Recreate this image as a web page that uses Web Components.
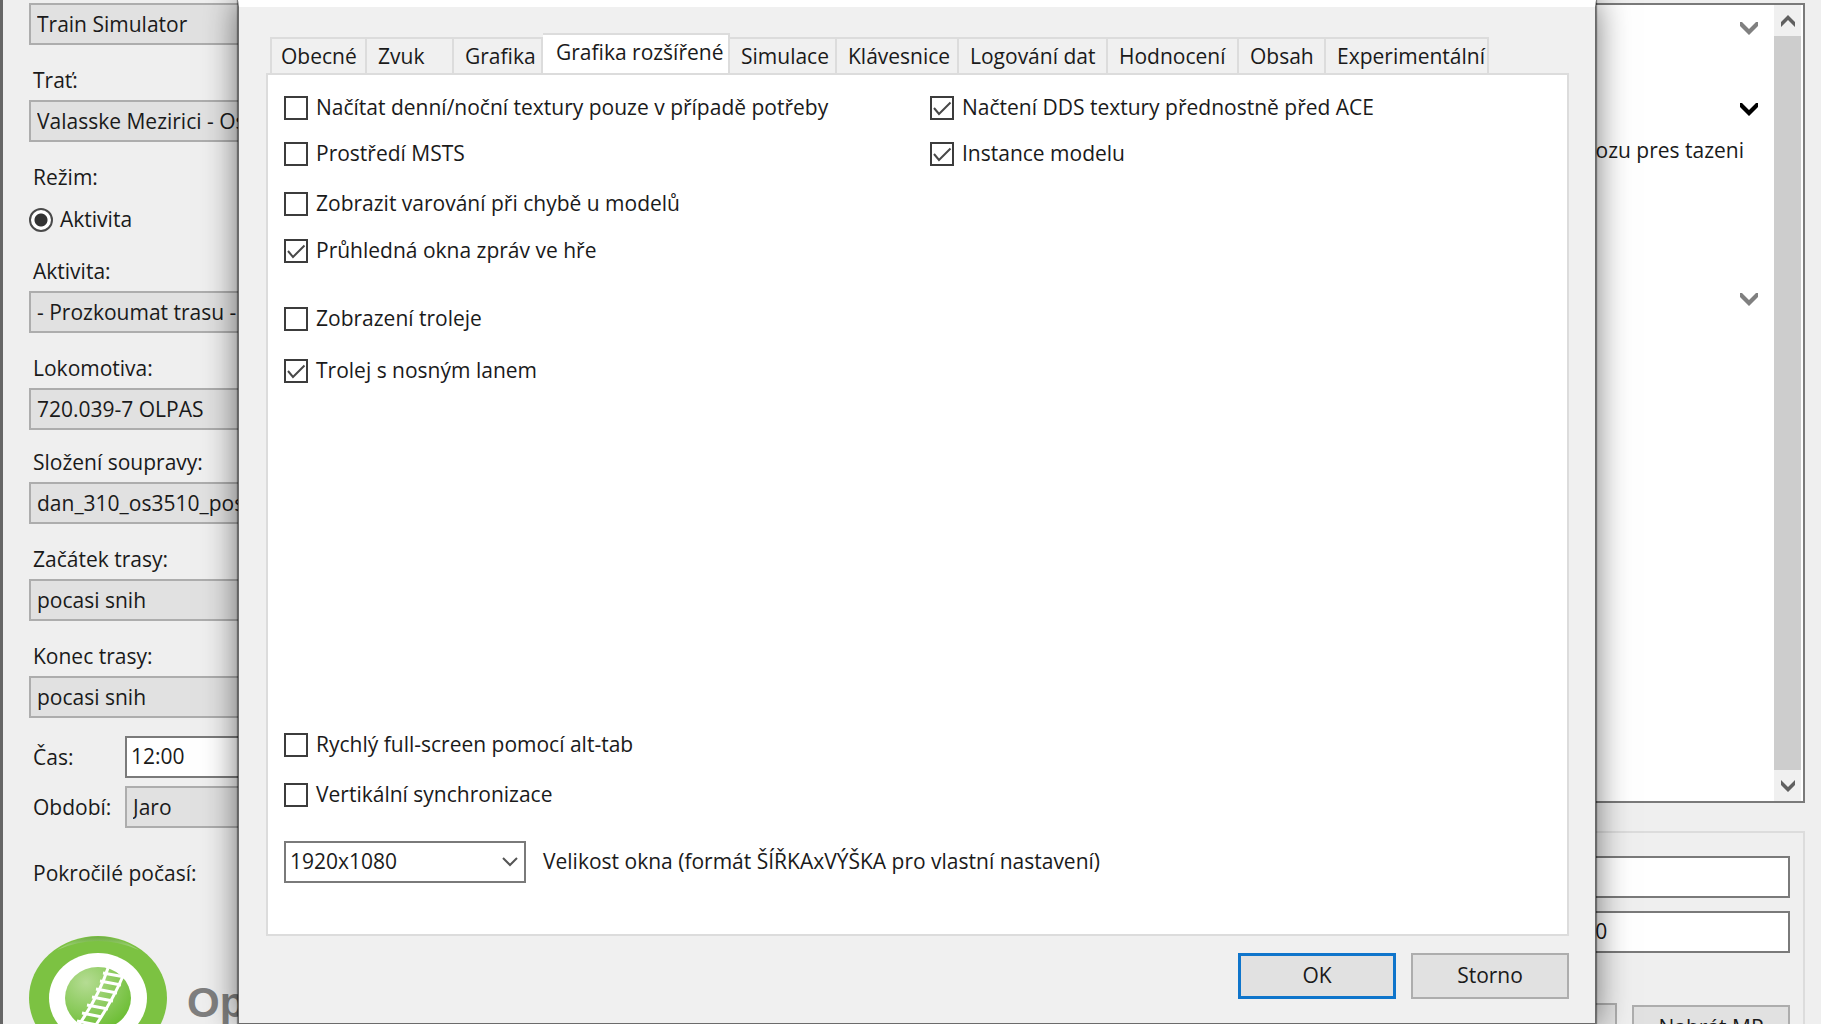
<!DOCTYPE html>
<html lang="cs">
<head>
<meta charset="utf-8">
<title>Open Rails</title>
<style>
    body {
        margin: 0;
        overflow: hidden;
        background: #efefef;
        color: #1a1a1a;
        font-family: "Open Sans", "Noto Sans", sans-serif;
        font-size: 21px;
        line-height: 28px;
    }
</style>
</head>
<body>
<launcher-window></launcher-window>

<script>
const define = (name, html, setup) => {
  const template = document.createElement('template');
  template.innerHTML = html;
  customElements.define(name, class extends HTMLElement {
    constructor() {
      super();
      this._shadowRoot = this.attachShadow({ mode: 'open' });
      this._shadowRoot.appendChild(template.content.cloneNode(true));
    }
    connectedCallback() {
      if (setup) setup(this, this._shadowRoot);
    }
  });
};

// label above (or left of) a drop-down or a text box
define('launcher-field', `
    <style>
        :host {
            display: flex;
            flex-direction: column;
            justify-content: flex-end;
            gap: 6px;
        }
        :host([inline]) {
            display: grid;
            grid-template-columns: 96px 1fr;
            align-content: end;
            align-items: center;
            gap: 0;
        }
        label {
            padding-left: 4px;
            white-space: nowrap;
        }
        label:empty {
            display: none;
        }
        select, input {
            appearance: none;
            box-sizing: border-box;
            width: 100%;
            height: 42px;
            margin: 0;
            padding: 0 6px;
            border: 2px solid #adadad;
            border-radius: 0;
            background: #e1e1e1;
            color: inherit;
            font: inherit;
        }
        input {
            padding: 0 4px 2px;
            border-color: #7a7a7a;
            background: #fff;
        }
    </style>
    <label for="control"></label>
`, (host, root) => {
  root.querySelector('label').textContent = host.getAttribute('label') || '';
  const value = host.getAttribute('value') || '';
  let control;
  if (host.hasAttribute('text')) {
    control = document.createElement('input');
    control.type = 'text';
    control.value = value;
  } else {
    control = document.createElement('select');
    control.add(new Option(value));
  }
  control.id = 'control';
  if (!host.hasAttribute('label')) control.setAttribute('aria-label', host.getAttribute('name'));
  root.appendChild(control);
});

define('launcher-radio', `
    <style>
        :host {
            display: block;
        }
        label {
            display: flex;
            align-items: center;
            gap: 7px;
            height: 24px;
        }
        input {
            appearance: none;
            box-sizing: border-box;
            width: 24px;
            height: 24px;
            margin: 0;
            border: 2px solid #4a4a4a;
            border-radius: 50%;
            background: #fff;
        }
        input:checked {
            background: radial-gradient(circle, #333 6px, #fff 7px);
        }
        .text {
            padding-bottom: 2px;
        }
    </style>
    <label><input type="radio" checked><span class="text"><slot></slot></span></label>
`);

define('option-check', `
    <style>
        :host {
            display: block;
        }
        label {
            display: inline-flex;
            align-items: center;
            gap: 8px;
            height: 24px;
            white-space: nowrap;
        }
        .box {
            display: grid;
            width: 24px;
            height: 24px;
        }
        .text {
            padding-bottom: 2px;
        }
        input, svg {
            grid-area: 1 / 1;
        }
        input {
            appearance: none;
            box-sizing: border-box;
            width: 24px;
            height: 24px;
            margin: 0;
            border: 2px solid #3c3c3c;
            background: #fff;
        }
        svg {
            visibility: hidden;
            pointer-events: none;
        }
        input:checked + svg {
            visibility: visible;
        }
    </style>
    <label>
        <span class="box">
            <input type="checkbox">
            <svg width="24" height="24" viewBox="0 0 24 24" fill="none" stroke="#484848" stroke-width="2"><path d="M4 12l5 6L20.500 6.500"/></svg>
        </span>
        <span class="text"><slot></slot></span>
    </label>
`, (host, root) => {
  root.querySelector('input').checked = host.hasAttribute('checked');
});

define('push-button', `
    <style>
        :host {
            display: block;
        }
        button {
            box-sizing: border-box;
            width: 100%;
            height: 46px;
            padding: 0 0 2px;
            border: 2px solid #adadad;
            background: #e1e1e1;
            color: inherit;
            font: inherit;
        }
        :host([default]) button {
            border: 3px solid #0f75cb;
        }
    </style>
    <button type="button"><slot></slot></button>
`);

define('expander-arrow', `
    <style>
        :host {
            display: flex;
            justify-content: flex-end;
            color: #808080;
        }
        :host([active]) {
            color: #000;
        }
        button {
            display: flex;
            align-items: center;
            width: 18px;
            height: 46px;
            padding: 0;
            border: 0;
            background: none;
            color: inherit;
        }
    </style>
    <button type="button" aria-label="Rozbalit">
        <svg width="18" height="14" viewBox="0 0 18 14" fill="currentColor"><path d="M0 1h2l7 7 7-7h2v4l-9 9-9-9z"/></svg>
    </button>
`);

define('scroll-bar', `
    <style>
        :host {
            display: flex;
            flex-direction: column;
            width: 27px;
            background: #f0f0f0;
        }
        button {
            display: flex;
            align-items: center;
            justify-content: center;
            height: 31px;
            padding: 0;
            border: 0;
            background: none;
        }
        .thumb {
            flex: 1;
            background: #cdcdcd;
        }
    </style>
    <button type="button" aria-label="Nahoru">
        <svg width="14" height="12" viewBox="0 0 14 12" fill="#606060"><path d="M7 0l7 7v5l-7-7-7 7V7z"/></svg>
    </button>
    <div class="thumb"></div>
    <button type="button" aria-label="Dolů">
        <svg width="14" height="12" viewBox="0 0 14 12" fill="#606060"><path d="M7 12l7-7V0L7 7 0 0v5z"/></svg>
    </button>
`);

define('rails-logo', `
    <style>
        :host {
            display: flex;
            align-items: center;
            gap: 20px;
            color: #7f7f7f;
            font: bold 42px/48px "Liberation Sans", Arial, sans-serif;
        }
        svg {
            flex: none;
        }
        .name {
            padding-top: 10px;
        }
    </style>
    <svg width="138" height="124" viewBox="0 0 138 124">
        <defs>
            <radialGradient id="ball" cx=".32" cy=".25" r=".8">
                <stop offset="0" stop-color="#b5dc93"/>
                <stop offset="1" stop-color="#6dbe35"/>
            </radialGradient>
            <linearGradient id="shine" x1="0" y1="0" x2="0" y2="1">
                <stop offset="0" stop-color="#6fae42"/>
                <stop offset="1" stop-color="#a9d983"/>
            </linearGradient>
        </defs>
        <ellipse cx="69" cy="62" rx="69" ry="62" fill="#7cc242"/>
        <path d="M28 14Q69-13 110 14Q69-4 28 14z" fill="url(#shine)"/>
        <ellipse cx="69" cy="62" rx="49" ry="45" fill="#fff"/>
        <ellipse cx="69" cy="62" rx="33" ry="31" fill="url(#ball)"/>
        <g fill="none" stroke="#fff" stroke-width="3">
            <path d="M79 32Q70 60 49 90M94 40Q82 68 62 96"/>
            <path d="M74 37l22 4M71 45l21 4M67 53l21 4M63 61l21 4M58 69l21 4M53 77l20 4M48 85l20 4"/>
        </g>
    </svg>
    <span class="name"><slot></slot></span>
`);

define('settings-tab', `
    <style>
        :host {
            display: flex;
            align-items: flex-end;
        }
        button {
            width: 100%;
            height: 36px;
            padding: 0 0 0 11px;
            border: 2px solid #dcdcdc;
            border-width: 2px 2px 0 0;
            background: #f0f0f0;
            color: inherit;
            font: inherit;
            text-align: left;
            white-space: nowrap;
        }
        :host(:first-child) button {
            border-left-width: 2px;
            padding-left: 9px;
        }
        :host([selected]) button {
            height: 42px;
            margin-bottom: -2px;
            padding: 0 0 6px 13px;
            background: #fff;
        }
    </style>
    <button type="button" role="tab"><slot></slot></button>
`, (host, root) => {
  root.querySelector('button').setAttribute('aria-selected', host.hasAttribute('selected'));
});

define('resolution-picker', `
    <style>
        :host {
            display: flex;
            align-items: center;
            gap: 17px;
            white-space: nowrap;
        }
        .combo {
            display: grid;
            width: 242px;
            align-items: center;
        }
        select, svg {
            grid-area: 1 / 1;
        }
        select {
            appearance: none;
            box-sizing: border-box;
            height: 42px;
            padding: 0 4px 2px;
            border: 2px solid #7a7a7a;
            border-radius: 0;
            background: #fff;
            color: inherit;
            font: inherit;
        }
        svg {
            justify-self: end;
            margin-right: 8px;
            pointer-events: none;
        }
        label {
            padding-bottom: 2px;
        }
    </style>
    <div class="combo">
        <select id="size"><option>1920x1080</option></select>
        <svg width="16" height="10" viewBox="0 0 16 10" fill="none" stroke="#555" stroke-width="2"><path d="M1 1l7 7 7-7"/></svg>
    </div>
    <label for="size"><slot></slot></label>
`);

define('settings-dialog', `
    <style>
        :host {
            display: flex;
            flex-direction: column;
            box-sizing: border-box;
            border: 1px solid #6b6b6b;
            border-top: 7px solid #fff;
            background: #f0f0f0;
            box-shadow: 0 0 32px rgba(0, 0, 0, .55), 0 0 1px 1px rgba(0, 0, 0, .4);
            padding: 26px 26px 24px 27px;
        }
        .tabs {
            display: grid;
            grid-template-columns: 97px 87px 89px 187px 107px 122px 149px 131px 87px 163px;
            height: 40px;
            padding-left: 4px;
        }
        .page {
            flex: 1;
            display: grid;
            grid-template-columns: 646px 1fr;
            grid-template-rows: 46px 50px 47px 68px 52px 1fr 50px 58px 42px;
            padding: 21px 16px 51px;
            border: 2px solid #dcdcdc;
            background: #fff;
        }
        .left {
            grid-column: 1;
        }
        .bottom {
            grid-row: 7;
        }
        .size {
            grid-column: 1 / 3;
        }
        .buttons {
            display: grid;
            grid-template-columns: 158px 158px;
            justify-content: end;
            gap: 15px;
            margin-top: 17px;
        }
    </style>
    <div class="tabs" role="tablist">
        <settings-tab>Obecné</settings-tab>
        <settings-tab>Zvuk</settings-tab>
        <settings-tab>Grafika</settings-tab>
        <settings-tab selected>Grafika rozšířené</settings-tab>
        <settings-tab>Simulace</settings-tab>
        <settings-tab>Klávesnice</settings-tab>
        <settings-tab>Logování dat</settings-tab>
        <settings-tab>Hodnocení</settings-tab>
        <settings-tab>Obsah</settings-tab>
        <settings-tab>Experimentální</settings-tab>
    </div>
    <div class="page">
        <option-check>Načítat denní/noční textury pouze v případě potřeby</option-check>
        <option-check checked>Načtení DDS textury přednostně před ACE</option-check>
        <option-check>Prostředí MSTS</option-check>
        <option-check checked>Instance modelu</option-check>
        <option-check class="left">Zobrazit varování při chybě u modelů</option-check>
        <option-check class="left" checked>Průhledná okna zpráv ve hře</option-check>
        <option-check class="left">Zobrazení troleje</option-check>
        <option-check class="left" checked>Trolej s nosným lanem</option-check>
        <option-check class="left bottom">Rychlý full-screen pomocí alt-tab</option-check>
        <option-check class="left">Vertikální synchronizace</option-check>
        <resolution-picker class="size">Velikost okna (formát ŠÍŘKAxVÝŠKA pro vlastní nastavení)</resolution-picker>
    </div>
    <div class="buttons">
        <push-button default>OK</push-button>
        <push-button>Storno</push-button>
    </div>
`);

define('activity-details', `
    <style>
        :host {
            display: flex;
            flex: none;
            box-sizing: border-box;
            height: 800px;
            padding-right: 2px;
            border: 2px solid #7a7a7a;
            background: #fff;
        }
        .content {
            flex: 1;
            display: grid;
            grid-template-rows: 81px 50px 140px 1fr;
            padding-right: 16px;
        }
        p {
            margin: 0;
            padding-right: 14px;
            text-align: right;
        }
    </style>
    <div class="content">
        <expander-arrow></expander-arrow>
        <expander-arrow active></expander-arrow>
        <p>vozu pres tazeni</p>
        <expander-arrow></expander-arrow>
    </div>
    <scroll-bar></scroll-bar>
`);

define('multiplayer-group', `
    <style>
        :host {
            display: grid;
            flex: none;
            grid-template-rows: 42px 42px 85px;
            grid-template-columns: 158px 158px;
            justify-content: end;
            align-items: end;
            row-gap: 13px;
            column-gap: 15px;
            padding: 23px 13px;
            border: 2px solid #dcdcdc;
        }
        .wide {
            grid-column: 1 / 3;
        }
    </style>
    <launcher-field class="wide" text name="Jméno"></launcher-field>
    <launcher-field class="wide" text name="Adresa" value="127.0.0.1:3000"></launcher-field>
    <push-button></push-button>
    <push-button>Nahrát MP</push-button>
`);

define('launcher-window', `
    <style>
        :host {
            display: flex;
            justify-content: space-between;
            position: relative;
            box-sizing: border-box;
            height: 100vh;
            padding: 3px 16px 0 26px;
            border-left: 3px solid #666;
            overflow: hidden;
        }
        .route {
            display: grid;
            width: 340px;
            grid-template-rows: 42px 97px 90px 101px 97px 94px 97px 97px 60px 50px 59px 49px 124px;
        }
        .mode {
            display: flex;
            flex-direction: column;
            justify-content: flex-end;
            gap: 17px;
        }
        .mode span, .weather {
            padding-left: 4px;
        }
        .weather {
            align-self: end;
        }
        rails-logo {
            grid-row: 13;
        }
        .info {
            display: flex;
            flex-direction: column;
            gap: 28px;
            width: 380px;
        }
        /* modal window floating over the launcher */
        settings-dialog {
            position: absolute;
            top: 0;
            bottom: 0;
            left: 235px;
            right: 225px;
        }
    </style>
    <div class="route">
        <launcher-field name="Profil" value="Train Simulator"></launcher-field>
        <launcher-field label="Trať:" value="Valasske Mezirici - Os"></launcher-field>
        <div class="mode">
            <span>Režim:</span>
            <launcher-radio>Aktivita</launcher-radio>
        </div>
        <launcher-field label="Aktivita:" value="- Prozkoumat trasu -"></launcher-field>
        <launcher-field label="Lokomotiva:" value="720.039-7 OLPAS"></launcher-field>
        <launcher-field label="Složení soupravy:" value="dan_310_os3510_posu"></launcher-field>
        <launcher-field label="Začátek trasy:" value="pocasi snih"></launcher-field>
        <launcher-field label="Konec trasy:" value="pocasi snih"></launcher-field>
        <launcher-field inline text label="Čas:" value="12:00"></launcher-field>
        <launcher-field inline label="Období:" value="Jaro"></launcher-field>
        <span class="weather">Pokročilé počasí:</span>
        <rails-logo>Op</rails-logo>
    </div>
    <div class="info">
        <activity-details></activity-details>
        <multiplayer-group></multiplayer-group>
    </div>
    <settings-dialog></settings-dialog>
`);
</script>
</body>
</html>
